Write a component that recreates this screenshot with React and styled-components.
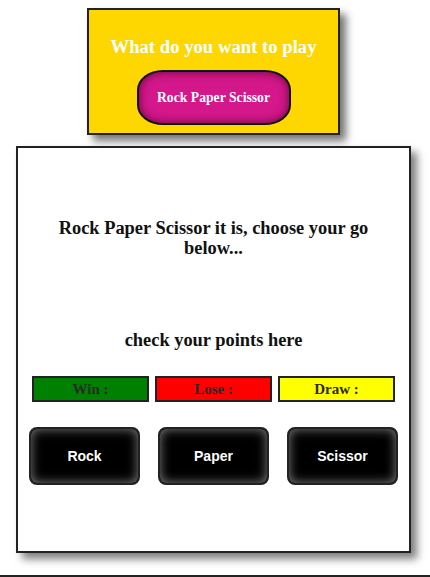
import React from 'react'
import styled, { createGlobalStyle } from 'styled-components'

const GlobalStyle = createGlobalStyle`
    body {
        margin: 0;
        background: #ffffff;
        font-family: "Liberation Serif", "Times New Roman", serif;
    }
`

const Page = styled.div`
    width: 430px;
    height: 577px;
    overflow: hidden;
    padding-top: 8px;
    box-sizing: border-box;
`

const Chooser = styled.div`
    width: 253px;
    height: 127px;
    margin-left: 87px;
    box-sizing: border-box;
    background: #ffd700;
    border: 2px solid #222;
    box-shadow: 6px 6px 8px rgba(0, 0, 0, 0.55);
    display: flex;
    flex-direction: column;
    align-items: center;
    padding-top: 26px;
`

const ChooserTitle = styled.h3`
    margin: 0;
    color: #fff;
    font-size: 18.7px;
    font-weight: bold;
    line-height: 22px;
`

const GameButton = styled.button`
    margin-top: 12px;
    width: 154px;
    height: 55px;
    border: 2px solid #111;
    border-radius: 26px / 20px;
    background: #d4178a;
    box-shadow: inset 0 0 10px rgba(60, 0, 30, 0.75);
    color: #fff;
    font-family: "Liberation Serif", "Times New Roman", serif;
    font-weight: bold;
    font-size: 13.7px;
    cursor: pointer;
`

const Board = styled.div`
    width: 395px;
    height: 407px;
    margin: 11px 0 0 16px;
    box-sizing: border-box;
    border: 2px solid #222;
    background: #fff;
    box-shadow: 6px 6px 8px rgba(0, 0, 0, 0.5);
    display: flex;
    flex-direction: column;
    align-items: center;
    padding: 70px 14px 0;
`

const Message = styled.h3`
    margin: 0;
    color: #111;
    font-size: 18.4px;
    line-height: 20px;
    text-align: center;
    padding: 0 26px;
`

const PointsTitle = styled.h3`
    margin: 72px 0 0;
    color: #111;
    font-size: 18.4px;
    line-height: 20px;
    text-align: center;
`

const ScoreRow = styled.div`
    margin-top: 26px;
    display: flex;
    gap: 6px;
`

const Score = styled.div`
    width: 117px;
    height: 26px;
    box-sizing: border-box;
    border: 2px solid #222;
    background: ${(p) => p.color};
    color: #2a2a2a;
    font-weight: bold;
    font-size: 15px;
    display: flex;
    align-items: center;
    justify-content: center;
`

const ChoiceRow = styled.div`
    margin-top: 25px;
    display: flex;
    gap: 18px;
`

const Choice = styled.button`
    width: 111px;
    height: 58px;
    border: 2px solid #222;
    border-radius: 8px;
    background: #000;
    box-shadow: inset 0 0 11px rgba(255, 255, 255, 0.5);
    color: #fff;
    font-family: "Liberation Sans", Arial, sans-serif;
    font-weight: bold;
    font-size: 14px;
    cursor: pointer;
`

const Footer = styled.div`
    margin-top: 22px;
    border-top: 2px solid #222;
`

const scores = [
    { label: 'Win :', color: '#008000' },
    { label: 'Lose :', color: '#ff0000' },
    { label: 'Draw :', color: '#ffff00' },
]

const choices = ['Rock', 'Paper', 'Scissor']

const App = () => {
    return (
        <Page>
            <GlobalStyle />
            <Chooser>
                <ChooserTitle>What do you want to play</ChooserTitle>
                <GameButton>Rock Paper Scissor</GameButton>
            </Chooser>
            <Board>
                <Message>Rock Paper Scissor it is, choose your go below...</Message>
                <PointsTitle>check your points here</PointsTitle>
                <ScoreRow>
                    {scores.map((s) => (
                        <Score key={s.label} color={s.color}>{s.label}</Score>
                    ))}
                </ScoreRow>
                <ChoiceRow>
                    {choices.map((c) => (
                        <Choice key={c}>{c}</Choice>
                    ))}
                </ChoiceRow>
            </Board>
            <Footer />
        </Page>
    )
}

export default App
